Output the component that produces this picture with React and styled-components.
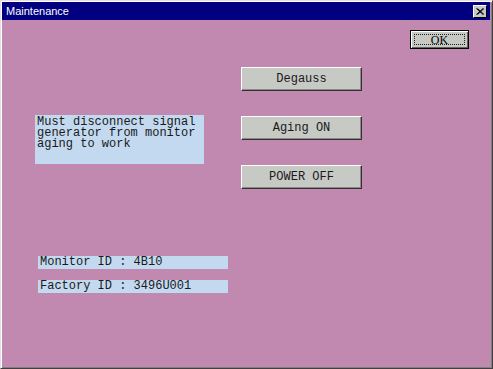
import React from "react";
import styled, { createGlobalStyle } from "styled-components";

const Global = createGlobalStyle`
  html, body { margin: 0; padding: 0; background: #c189af; }
  #root { width: 493px; height: 369px; }
`;

const Window = styled.div`
  box-sizing: border-box;
  width: 493px;
  height: 369px;
  background: #c189af;
  border-top: 1px solid #e8dde6;
  border-left: 1px solid #e8dde6;
  border-right: 1px solid #404040;
  border-bottom: 1px solid #404040;
  box-shadow: inset 1px 1px 0 #ffffff, inset -1px -1px 0 #808080;
  padding: 1px 2px 2px 1px;
  display: flex;
  flex-direction: column;
`;

const TitleBar = styled.div`
  height: 18px;
  background: #000080;
  display: flex;
  align-items: center;
  justify-content: space-between;
  padding: 0 3px 0 4px;
`;

const Title = styled.span`
  color: #ffffff;
  font-family: "Liberation Sans", Arial, sans-serif;
  font-size: 11px;
`;

const CloseBtn = styled.div`
  box-sizing: border-box;
  width: 14px;
  height: 13px;
  background: #c8c8c8;
  border-top: 1px solid #ffffff;
  border-left: 1px solid #ffffff;
  border-right: 1px solid #000;
  border-bottom: 1px solid #000;
  display: flex;
  align-items: center;
  justify-content: center;
`;

const Content = styled.div`
  flex: 1;
  display: flex;
  padding-left: 33px;
`;

const LeftCol = styled.div`
  width: 193px;
  display: flex;
  flex-direction: column;
  padding-top: 95px;
`;

const InfoBox = styled.div`
  box-sizing: border-box;
  width: 169px;
  height: 49px;
  background: #c3d9ef;
  font-family: "Liberation Mono", "Courier New", monospace;
  font-size: 12px;
  line-height: 11px;
  color: #1a1a1a;
  padding: 2px 0 0 2px;
  white-space: pre;
`;

const IdRow = styled.div`
  box-sizing: border-box;
  width: 190px;
  height: 13px;
  margin-left: 3px;
  margin-top: ${p => p.$top}px;
  background: #c3d9ef;
  font-family: "Liberation Mono", "Courier New", monospace;
  font-size: 12px;
  line-height: 13px;
  color: #1a1a1a;
  padding-left: 2px;
  white-space: pre;
`;

const MidCol = styled.div`
  margin-left: 13px;
  display: flex;
  flex-direction: column;
  gap: 25px;
  padding-top: 47px;
`;

const Button = styled.div`
  box-sizing: border-box;
  width: ${p => p.$w || 121}px;
  height: ${p => p.$h || 24}px;
  background: #c6c9c4;
  border-top: 1px solid #ffffff;
  border-left: 1px solid #ffffff;
  border-right: 1px solid #303030;
  border-bottom: 1px solid #303030;
  box-shadow: inset -1px -1px 0 #8a8a8a;
  display: flex;
  align-items: center;
  justify-content: center;
  font-family: "Liberation Mono", "Courier New", monospace;
  font-size: 12px;
  color: #1a1a1a;
`;

const RightCol = styled.div`
  margin-left: 48px;
  padding-top: 10px;
`;

const DefaultButton = styled.div`
  box-sizing: border-box;
  width: 59px;
  height: 19px;
  border: 1px solid #000;
  background: #c6c9c4;
  box-shadow: inset 1px 1px 0 #ffffff, inset -1px -1px 0 #606060;
  padding: 3px;
  display: flex;
`;

const Focus = styled.div`
  flex: 1;
  border: 1px dotted #202020;
  display: flex;
  align-items: center;
  justify-content: center;
  font-family: "Liberation Serif", "Times New Roman", serif;
  font-size: 12px;
  line-height: 10px;
  color: #000;
`;

export default function App() {
  return (
    <>
      <Global />
      <Window>
        <TitleBar>
          <Title>Maintenance</Title>
          <CloseBtn>
            <svg width="8" height="7" viewBox="0 0 8 7">
              <path d="M0.5 0.5 L7 6.5 M1.5 0.5 L8 6.5 M7 0.5 L0.5 6.5 M8 0.5 L1.5 6.5" stroke="#000" strokeWidth="1" />
            </svg>
          </CloseBtn>
        </TitleBar>
        <Content>
          <LeftCol>
            <InfoBox>{"Must disconnect signal\ngenerator from monitor\naging to work"}</InfoBox>
            <IdRow $top={92}>Monitor ID : 4B10</IdRow>
            <IdRow $top={11}>Factory ID : 3496U001</IdRow>
          </LeftCol>
          <MidCol>
            <Button>Degauss</Button>
            <Button>Aging ON</Button>
            <Button>POWER OFF</Button>
          </MidCol>
          <RightCol>
            <DefaultButton>
              <Focus>OK</Focus>
            </DefaultButton>
          </RightCol>
        </Content>
      </Window>
    </>
  );
}
